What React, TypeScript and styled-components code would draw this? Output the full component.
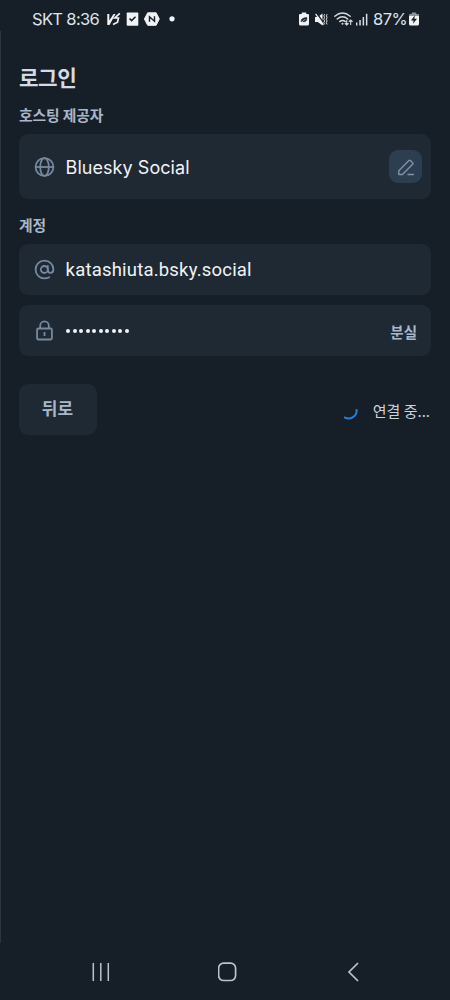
import React from "react";
import styled, { createGlobalStyle } from "styled-components";

const Global = createGlobalStyle`
  * { box-sizing: border-box; }
  body { margin: 0; background: #161e27; }
`;

const korean = `"Noto Sans CJK KR", sans-serif`;

const Screen = styled.div`
  width: 450px;
  height: 1000px;
  display: flex;
  flex-direction: column;
  background: #161e27;
  color: #e9eef4;
  font-family: Inter, ${korean};
  overflow: hidden;
`;

const StatusBar = styled.header`
  height: 31px;
  flex: none;
  display: flex;
  justify-content: space-between;
  align-items: center;
  padding: 7px 31px 0 32px;
`;

const StatusGroup = styled.div`
  display: flex;
  align-items: center;
  height: 22px;
  svg { display: block; flex: none; }
`;

const StatusIcons = styled.div`
  display: flex;
  align-items: center;
  gap: 6px;
  margin-right: 5px;
  svg:last-child { margin-left: -2.5px; }
`;

const StatusText = styled.span<{ $width: number; $spacing: number }>`
  width: ${(p) => p.$width}px;
  font: 400 16.5px/22px Inter, sans-serif;
  letter-spacing: ${(p) => p.$spacing}px;
  white-space: nowrap;
  color: #dfe4ea;
`;

const Main = styled.main`
  height: 912px;
  flex: none;
  border-left: 1px solid #2b3440;
  padding: 32px 19px 0 18px;
`;

const Title = styled.h1`
  margin: 0 0 14px;
  font: 700 21.3px/28px ${korean};
  letter-spacing: -0.5px;
  color: #d4dbe4;
`;

const Label = styled.h2`
  margin: 0 0 9px;
  font: 700 14.8px/20px ${korean};
  letter-spacing: -0.1px;
  color: #a9b7c9;
`;

const Field = styled.div<{ $height: number; $gap: number }>`
  height: ${(p) => p.$height}px;
  margin-bottom: ${(p) => p.$gap}px;
  padding: 0 9px 0 15px;
  display: flex;
  align-items: center;
  border-radius: 9px;
  background: #1e2934;
  svg { display: block; flex: none; }
`;

const Value = styled.span<{ $family: string; $size: number; $spacing: number; $drop: number }>`
  flex: 1;
  padding: ${(p) => p.$drop}px 0 0 10.6px;
  font: 400 ${(p) => p.$size}px/24px ${(p) => p.$family}, sans-serif;
  letter-spacing: ${(p) => p.$spacing}px;
  color: #f1f3f5;
`;

const Dots = styled.span`
  flex: 1;
  display: flex;
  gap: 2.5px;
  padding-left: 11.3px;
`;

const Dot = styled.i`
  width: 4px;
  height: 4px;
  border-radius: 50%;
  background: #f1f3f5;
`;

const EditButton = styled.button`
  width: 33px;
  height: 33px;
  padding: 0;
  border: 0;
  border-radius: 9px;
  display: flex;
  align-items: center;
  justify-content: center;
  background: #2c3e50;
`;

const ForgotButton = styled.button`
  border: 0;
  background: none;
  padding: 3px 5px 0 0;
  font: 700 14.5px/20px ${korean};
  color: #a9b7c9;
`;

const Actions = styled.div`
  height: 51px;
  display: flex;
  justify-content: space-between;
  align-items: center;
`;

const BackButton = styled.button`
  width: 78px;
  height: 51px;
  border: 0;
  border-radius: 9px;
  padding: 0 1px 4px 0;
  background: #1e2934;
  color: #a9b7c9;
  font: 700 17px/24px ${korean};
`;

const Progress = styled.div`
  display: flex;
  align-items: center;
  gap: 14px;
  padding: 2px 1px 0 0;
  font: 400 15px/22px ${korean};
  color: #cbd3dd;
  svg { display: block; }
`;

const NavBar = styled.nav`
  height: 57px;
  flex: none;
  display: flex;
  justify-content: space-between;
  align-items: center;
  padding: 0 88px;
  color: #bcc2c9;
  svg { display: block; }
`;

const BatteryEco = () => (
  <svg width="10" height="14" viewBox="0 0 9 14" preserveAspectRatio="none">
    <path d="M2.5.5h4v1.4H8Q9 2 9 3v9q0 1.5-1.5 1.5h-6Q0 13.500 0 12V3q0-1 1-1.100h1.500z" fill="#f0f2f4" />
    <path d="M2 9.800C1.800 7.200 3 6.200 7 5.500c.3 3.200-1 4.700-4 4.200M3.500 8.500l2-1" fill="#161e27" stroke="#161e27" strokeWidth=".6" />
    <path d="M2.700 10c.8-1.500 1.800-2 3-2.600" fill="none" stroke="#f0f2f4" strokeWidth=".7" />
  </svg>
);

const Muted = () => (
  <svg width="13" height="13" viewBox="0 0 13 13">
    <path d="M0 4h2.800L7.500.6v11.800L2.800 9H0z" fill="#f0f2f4" />
    <path d="M1.500 0l8 11" stroke="#161e27" strokeWidth="1.300" />
    <path d="M.6.8l7.800 11" stroke="#f0f2f4" strokeWidth="1.200" />
    <path d="M9.600 1.200l-.8 1.700.8 1.700-.8 1.700.8 1.700-.8 1.700.8 1.700M12.100 1.200l-.8 1.700.8 1.700-.8 1.700.8 1.700-.8 1.700.8 1.700" fill="none" stroke="#e0e4e8" strokeWidth="1" />
  </svg>
);

const Wifi = () => (
  <svg width="19" height="14" viewBox="0 0 19 14" fill="none" stroke="#d9dde2" strokeWidth="1.400" strokeLinecap="round">
    <path d="M.8 4.300q7.700-6.500 15.400 0M3.200 7q5.300-4.400 10.600 0M5.700 9.600q2.800-2.200 5.600 0" />
    <circle cx="8.500" cy="11.700" r="1" fill="#d9dde2" stroke="none" />
    <path d="M12.700 8.300v4.500M11.200 11.500l1.500 1.500 1.500-1.500M16.700 12.500V8M15.200 9.500L16.700 8l1.500 1.500" strokeWidth="1.100" />
  </svg>
);

const Signal = () => (
  <svg width="12" height="13" viewBox="0 0 12 13" fill="#d9dde2">
    <rect x="0" y="9.500" width="1.400" height="3" />
    <rect x="3.300" y="7" width="1.500" height="5.500" />
    <rect x="6.600" y="4" width="1.500" height="8.500" />
    <rect x="9.900" y=".8" width="1.500" height="11.700" />
  </svg>
);

const BatteryCharging = () => (
  <svg width="10" height="14" viewBox="0 0 9 14" preserveAspectRatio="none">
    <path d="M2.500.5h4v1.400H8Q9 2 9 3v2H0V3q0-1 1-1.100h1.500z" fill="#8d949c" />
    <path d="M0 4h9v8q0 1.500-1.500 1.500h-6Q0 13.500 0 12z" fill="#f0f2f4" />
    <path d="M5.300 3.300L1.800 8.400h2.300l-.5 3.400 3.600-5H4.800z" fill="#161e27" />
  </svg>
);

const NotificationIcons = () => (
  <svg width="70" height="16" viewBox="107 11.500 70 16">
    <path d="M107.300 14.500h2v6.500l4.200-6.500h2l-6 11h-2.200z" fill="#f0f2f4" />
    <path d="M119.800 13.800l-5 4.700h3.700l-1 4.200-4.500 2.300" fill="none" stroke="#f0f2f4" strokeWidth="1.700" />
    <rect x="126.700" y="13" width="11.600" height="13.300" rx=".8" fill="#f0f2f4" />
    <path d="M129.500 19l2.100 2.100 3.900-3.900" fill="none" stroke="#161e27" strokeWidth="1.500" />
    <path d="M147.700 13.300h8.400l3.200 6.200-3.200 6.300h-8.400l-3.300-6.300z" fill="#f0f2f4" stroke="#f0f2f4" strokeLinejoin="round" />
    <path d="M149.500 22.300v-5l5 4.500v-5" fill="none" stroke="#161e27" strokeWidth="1.400" />
    <circle cx="172" cy="19.300" r="2.600" fill="#f0f2f4" />
  </svg>
);

const Globe = () => (
  <svg width="21" height="21" viewBox="0 0 21 21" fill="none" stroke="#76899e" strokeWidth="1.800">
    <circle cx="10.500" cy="11" r="8.900" />
    <ellipse cx="10.500" cy="11" rx="4.300" ry="8.900" />
    <path d="M1.600 11h17.800" />
  </svg>
);

const AtSign = () => (
  <svg width="21" height="21" viewBox="0 0 21 21" fill="none" stroke="#76899e" strokeWidth="1.800" strokeLinecap="round">
    <circle cx="10.300" cy="10.500" r="3.500" />
    <path d="M13.800 10.500c0 2.300.9 3.300 2.500 3.300 2 0 3.100-1.500 3.100-3.300A8.900 8.900 0 1 0 10.500 19.400c1.700 0 3.300-.4 4.700-1.200M13.800 7v3.500" />
  </svg>
);

const Lock = () => (
  <svg width="21" height="21" viewBox="0 0 21 21" fill="none" stroke="#76899e" strokeWidth="1.800">
    <rect x="3.100" y="8.500" width="14.800" height="11" rx="1.200" />
    <path d="M6.200 8.500V5.600a4.300 4.300 0 0 1 8.600 0v2.900M10.500 12v4" />
  </svg>
);

const Pencil = () => (
  <svg width="18" height="18" viewBox="0 0 18 18" fill="none" stroke="#7f92a8" strokeWidth="1.400" strokeLinejoin="round" strokeLinecap="round">
    <path d="M1.800 16.500v-3.700L11.900 2.600a1 1 0 0 1 1.500 0l2.200 2.200a1 1 0 0 1 0 1.500L5.500 16.500zM11 16.500h5.400" />
  </svg>
);

export default function App() {
  return (
    <Screen>
      <Global />
      <StatusBar>
        <StatusGroup>
          <StatusText $width={75} $spacing={-0.65}>SKT 8:36</StatusText>
          <NotificationIcons />
        </StatusGroup>
        <StatusGroup>
          <StatusIcons>
            <BatteryEco />
            <Muted />
            <Wifi />
            <Signal />
          </StatusIcons>
          <StatusText $width={36} $spacing={-0.5}>87%</StatusText>
          <BatteryCharging />
        </StatusGroup>
      </StatusBar>
      <Main>
        <Title>로그인</Title>
        <Label>호스팅 제공자</Label>
        <Field $height={65} $gap={16}>
          <Globe />
          <Value $family="Inter" $size={18} $spacing={0.05} $drop={2}>Bluesky Social</Value>
          <EditButton aria-label="편집"><Pencil /></EditButton>
        </Field>
        <Label>계정</Label>
        <Field $height={51} $gap={10}>
          <AtSign />
          <Value $family="Roboto" $size={18.5} $spacing={0.2} $drop={0}>katashiuta.bsky.social</Value>
        </Field>
        <Field $height={51} $gap={28}>
          <Lock />
          <Dots>{Array.from({ length: 10 }, (_, i) => <Dot key={i} />)}</Dots>
          <ForgotButton>분실</ForgotButton>
        </Field>
        <Actions>
          <BackButton>뒤로</BackButton>
          <Progress>
            <svg width="18" height="18" viewBox="0 0 18 18" fill="none" stroke="#2281dd" strokeWidth="2">
              <path d="M15.500 7.100A8 8 0 0 1 3.200 15.100" />
            </svg>
            <span>연결 중...</span>
          </Progress>
        </Actions>
      </Main>
      <NavBar>
        <svg width="25" height="20" viewBox="0 0 25 20" stroke="currentColor" strokeWidth="1.500">
          <path d="M5.300 1v18M12.800 1v18M20.300 1v18" />
        </svg>
        <svg width="20" height="20" viewBox="0 0 20 20" fill="none" stroke="currentColor" strokeWidth="1.700">
          <rect x=".6" y="1.200" width="17" height="17.300" rx="5" />
        </svg>
        <svg width="20" height="20" viewBox="0 0 20 20" fill="none" stroke="currentColor" strokeWidth="1.700">
          <path d="M16 1L7 10l9 9" />
        </svg>
      </NavBar>
    </Screen>
  );
}
